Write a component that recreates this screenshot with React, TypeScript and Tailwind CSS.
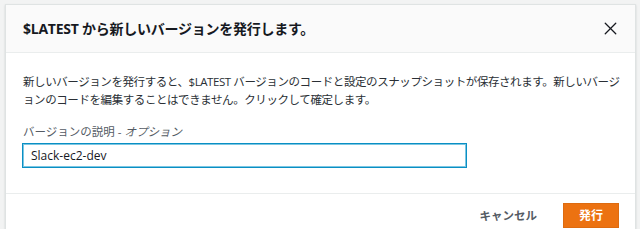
import { X } from 'lucide-react'

const font = { fontFamily: '"Open Sans", "Noto Sans CJK JP", sans-serif' }

export default function App() {
  return (
    <div className="w-full h-[229px] overflow-hidden bg-[#f2f3f3] pl-[5px] pr-[4px] pt-[4px]" style={font}>
      <div className="bg-white border border-[#dfe3e3] shadow-[0_1px_2px_rgba(0,28,36,0.15)]">
        {/* Header */}
        <div className="h-[48px] bg-[#fafafa] border-b border-[#eaeded] flex items-center justify-between pl-[17px] pr-[14px]">
          <h2 className="text-[14px] font-bold text-[#16191f] tracking-[-0.25px]">
            $LATEST から新しいバージョンを発行します。
          </h2>
          <button className="text-[#16191f]">
            <X size={21} strokeWidth={1.5} />
          </button>
        </div>

        {/* Body */}
        <div className="px-[17px] pt-[20px] pb-[25px]">
          <p className="text-[11.5px] leading-[18px] text-[#2a2f35] tracking-[-0.42px] mb-[14px] -mr-[12px]">
            新しいバージョンを発行すると、$LATEST バージョンのコードと設定のスナップショットが保存されます。新しいバージョンのコードを編集することはできません。クリックして確定します。
          </p>
          <label className="block text-[11.5px] leading-[18px] text-[#545b64] mb-[1px]">
            バージョンの説明 - <span className="italic">オプション</span>
          </label>
          <input
            defaultValue="Slack-ec2-dev"
            className="w-[445px] h-[25px] -ml-[1px] px-[8px] text-[12px] text-[#16191f] border border-[#0a8fc4] shadow-[inset_0_0_0_1px_#7cc6e2] outline-none"
          />
        </div>

        {/* Footer */}
        <div className="border-t border-[#eaeded] pt-[9px] pb-[8px] pr-[16px] flex items-center justify-end gap-[26px]">
          <button className="text-[11.5px] font-semibold text-[#545b64]">キャンセル</button>
          <button className="w-[56px] h-[25px] bg-[#ec7211] border border-[#dd6b10] text-white text-[12px] font-bold">
            発行
          </button>
        </div>
      </div>
    </div>
  )
}
